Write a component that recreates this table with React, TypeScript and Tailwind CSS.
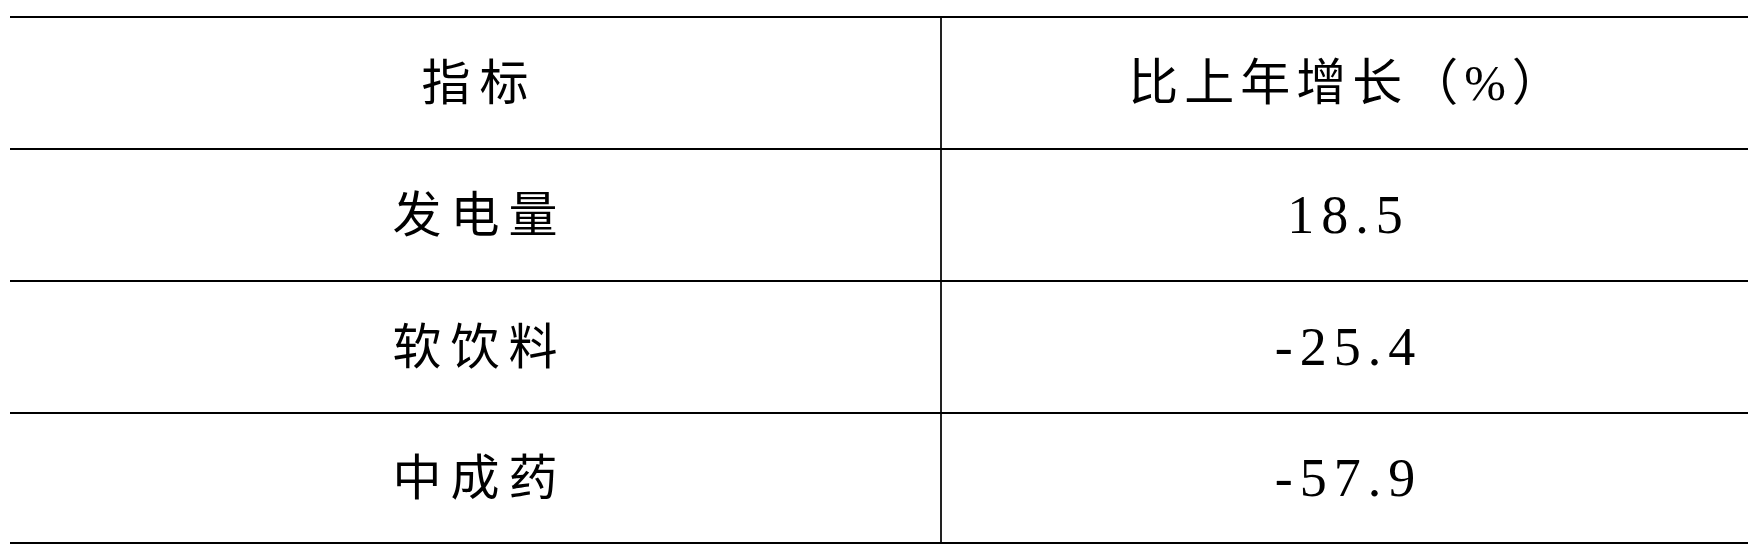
const rows = [
  { name: "发电量", value: "18.5" },
  { name: "软饮料", value: "-25.4" },
  { name: "中成药", value: "-57.9" },
];

function Row({ left, right, head, last }: { left: string; right: string; head?: boolean; last?: boolean }) {
  return (
    <div
      className={`grid grid-cols-[932px_1fr] h-[132px] border-t-2 border-black ${last ? "border-b-2" : ""}`}
    >
      <div className="flex items-center justify-center border-r-2 border-[#222]">
        <span className="[font-family:Liberation_Serif,Noto_Sans_CJK_SC,serif] text-[49px] leading-none tracking-[9px] text-black pl-[9px]">
          {left}
        </span>
      </div>
      <div className="flex items-center justify-center">
        {head ? (
          <span className="[font-family:Liberation_Serif,Noto_Sans_CJK_SC,serif] text-[50px] leading-none tracking-[6px] text-black pl-[6px]">
            {right}
          </span>
        ) : (
          <span className="[font-family:Liberation_Serif,Noto_Sans_CJK_SC,serif] text-[54px] leading-none tracking-[7px] text-black pl-[7px]">
            {right}
          </span>
        )}
      </div>
    </div>
  );
}

export default function App() {
  return (
    <div className="w-[1748px] h-[545px] overflow-hidden bg-white pt-[16px] pl-[10px]">
      <div className="flex flex-col">
        <Row left="指标" right="比上年增长（%）" head />
        {rows.map((r, i) => (
          <Row key={r.name} left={r.name} right={r.value} last={i === rows.length - 1} />
        ))}
      </div>
    </div>
  );
}
